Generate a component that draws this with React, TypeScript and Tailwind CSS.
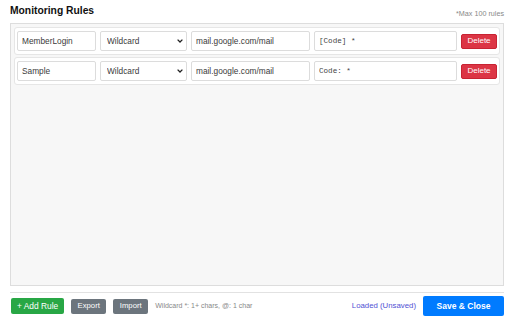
import React from 'react';

interface Rule {
  name: string;
  mode: string;
  url: string;
  pattern: string;
}

const rules: Rule[] = [
  { name: 'MemberLogin', mode: 'Wildcard', url: 'mail.google.com/mail', pattern: '[Code] *' },
  { name: 'Sample', mode: 'Wildcard', url: 'mail.google.com/mail', pattern: 'Code: *' },
];

const Chevron = () => (
  <svg width="6" height="4" viewBox="0 0 6 4" className="pointer-events-none absolute right-[4px] top-[8px]">
    <path d="M0.6 0.6 L3 3 L5.4 0.6" fill="none" stroke="#222" strokeWidth="1.3" />
  </svg>
);

const RuleRow: React.FC<{ rule: Rule }> = ({ rule }) => (
  <div className="flex items-center gap-[4px] bg-white border border-[#e6e6e6] rounded-[3px] px-[2px] py-[3px]">
    <input
      defaultValue={rule.name}
      className="block w-[79px] h-[20px] border border-[#dcdcdc] rounded-[2px] pl-[4px] text-[8.3px] text-[#3a3a3a] outline-none bg-white"
    />
    <div className="relative w-[87px] h-[20px]">
      <select
        defaultValue={rule.mode}
        className="block appearance-none w-full h-[20px] border border-[#dcdcdc] rounded-[2px] pl-[6px] text-[8.3px] text-[#3a3a3a] outline-none bg-white"
      >
        <option>Wildcard</option>
        <option>Regex</option>
      </select>
      <Chevron />
    </div>
    <input
      defaultValue={rule.url}
      className="block w-[119px] h-[20px] border border-[#dcdcdc] rounded-[2px] pl-[4px] text-[8.3px] text-[#3a3a3a] outline-none bg-white"
    />
    <input
      defaultValue={rule.pattern}
      className="block flex-1 min-w-0 h-[20px] border border-[#dcdcdc] rounded-[2px] pl-[4px] text-[7.6px] text-[#444] outline-none bg-white"
      style={{ fontFamily: '"Liberation Mono", monospace' }}
    />
    <button className="w-[36px] h-[15px] bg-[#dc3545] border border-[#c82333] rounded-[2px] text-white text-[8px] leading-none">
      Delete
    </button>
  </div>
);

export default function App() {
  return (
    <div
      className="w-[512px] h-[320px] flex flex-col bg-white pl-[10px] pr-[8px] overflow-hidden"
      style={{ fontFamily: '"Liberation Sans", Arial, sans-serif' }}
    >
      <div className="h-[23px] flex justify-between items-start shrink-0">
        <h1 className="pt-[5px] text-[10.3px] leading-[12px] font-bold text-[#111]">Monitoring Rules</h1>
        <span className="mt-[10px] text-[7.2px] leading-[8px] text-[#888]">*Max 100 rules</span>
      </div>

      <div className="flex-1 flex flex-col gap-[2px] bg-[#f7f7f7] border border-[#dddddd] px-[3px] pt-[3px]">
        {rules.map((r) => (
          <RuleRow key={r.name} rule={r} />
        ))}
      </div>

      <div className="mt-[6px] border-t border-[#e2e2e2] pt-[3px] pb-[4px] flex items-center justify-between shrink-0">
        <div className="flex items-center gap-[7px] pl-[1px]">
          <button className="h-[16px] px-[6px] bg-[#28a745] rounded-[2px] text-white text-[8.4px] leading-none">
            + Add Rule
          </button>
          <button className="h-[15px] w-[35px] bg-[#6c757d] rounded-[2px] text-white text-[7.7px] leading-none">
            Export
          </button>
          <button className="h-[15px] w-[35px] bg-[#6c757d] rounded-[2px] text-white text-[7.7px] leading-none">
            Import
          </button>
          <span className="text-[7px] text-[#888]">Wildcard *: 1+ chars, @: 1 char</span>
        </div>
        <div className="flex items-center gap-[7px]">
          <span className="text-[7.8px] text-[#5252d4]">Loaded (Unsaved)</span>
          <button className="h-[20px] w-[81px] bg-[#007bff] rounded-[2px] text-white text-[8.5px] font-bold leading-none">
            Save &amp; Close
          </button>
        </div>
      </div>
    </div>
  );
}
